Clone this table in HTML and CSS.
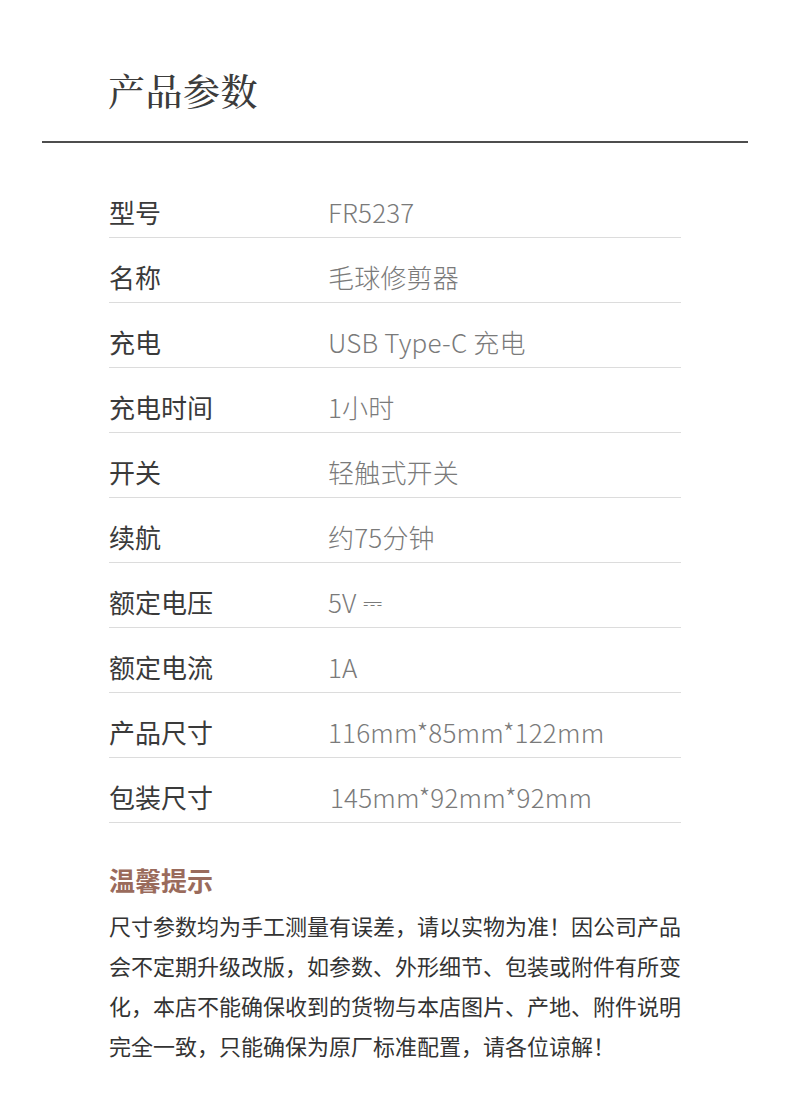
FILE: index.html
```html
<!DOCTYPE html>
<html lang="zh-CN">
<head>
<meta charset="utf-8">
<title>产品参数</title>
<link rel="stylesheet" href="styles.css">
</head>
<body>
<div class="page">
  <h1 class="title">产品参数</h1>
  <div class="rule"></div>
  <div class="specs">
    <div class="row"><span class="k">型号</span><span class="v">FR5237</span></div>
    <div class="row"><span class="k">名称</span><span class="v">毛球修剪器</span></div>
    <div class="row"><span class="k">充电</span><span class="v">USB Type-C 充电</span></div>
    <div class="row"><span class="k">充电时间</span><span class="v">1小时</span></div>
    <div class="row"><span class="k">开关</span><span class="v">轻触式开关</span></div>
    <div class="row"><span class="k">续航</span><span class="v">约75分钟</span></div>
    <div class="row"><span class="k">额定电压</span><span class="v">5V <span class="dc">⎓</span></span></div>
    <div class="row"><span class="k">额定电流</span><span class="v">1A</span></div>
    <div class="row"><span class="k">产品尺寸</span><span class="v">116mm*85mm*122mm</span></div>
    <div class="row"><span class="k">包装尺寸</span><span class="v v-shift">145mm*92mm*92mm</span></div>
  </div>
  <div class="tips">
    <h2 class="tips-title">温馨提示</h2>
    <p class="tips-text">尺寸参数均为手工测量有误差，请以实物为准！因公司产品会不定期升级改版，如参数、外形细节、包装或附件有所变化，本店不能确保收到的货物与本店图片、产地、附件说明完全一致，只能确保为原厂标准配置，请各位谅解！</p>
  </div>
</div>
</body>
</html>
```

FILE: styles.css
```css
html, body {
  margin: 0;
  padding: 0;
  background: #ffffff;
}
body {
  font-family: "Noto Sans CJK SC", "Noto Sans", sans-serif;
  color: #333;
}
.page {
  width: 790px;
  height: 1117px;
  overflow: hidden;
  padding-top: 66px;
  box-sizing: border-box;
}
.title {
  margin: 0 0 0 108px;
  font-family: "Noto Serif CJK SC", "Noto Sans CJK SC", serif;
  font-weight: 500;
  font-size: 37px;
  line-height: 48px;
  color: #3c3c3c;
  letter-spacing: 0.5px;
}
.rule {
  margin: 27px 42px 0 42px;
  height: 2px;
  background: #4d4d4d;
}
.specs {
  margin: 30px 109px 0 109px;
}
.row {
  display: flex;
  align-items: center;
  height: 65px;
  padding-top: 13px;
  box-sizing: border-box;
  border-bottom: 1px solid #dcdcdc;
  font-size: 26px;
  line-height: 26px;
}
.k {
  width: 219px;
  color: #3a3a3a;
  font-weight: 400;
}
.v {
  color: #7a7a7a;
  font-weight: 300;
  letter-spacing: 0.2px;
}
.v-shift {
  margin-left: 2px;
}
.dc {
  font-size: 24px;
  vertical-align: 2px;
}
.tips {
  margin: 41px 109px 0 109px;
}
.tips-title {
  margin: 0;
  font-size: 26px;
  line-height: 32px;
  font-weight: 700;
  color: #9a6b5c;
}
.tips-text {
  margin: 9px 0 0 0;
  font-size: 22px;
  line-height: 40px;
  color: #333;
  text-align: justify;
}
```
